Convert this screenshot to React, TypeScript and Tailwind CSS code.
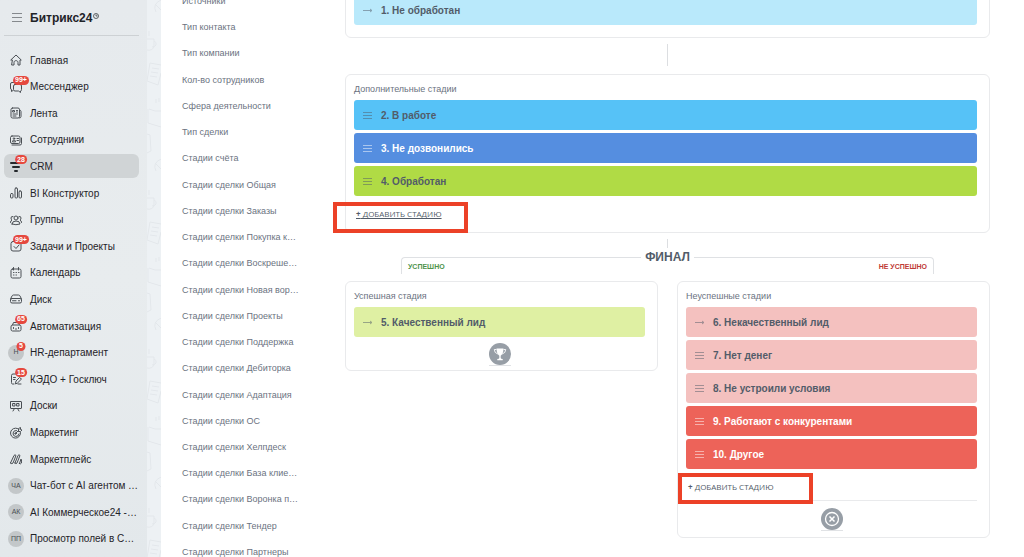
import React from "react";

type NavItem = {
  label: string;
  icon?: React.ReactNode;
  initials?: string;
  badge?: string;
  active?: boolean;
};

function Icon({ children }: { children: React.ReactNode }) {
  return (
    <svg
      viewBox="0 0 24 24"
      className="h-3 w-3 text-[#4a4f54]"
      fill="none"
      stroke="currentColor"
      strokeWidth="2"
      strokeLinecap="round"
      strokeLinejoin="round"
      aria-hidden="true"
    >
      {children}
    </svg>
  );
}

const navItems: NavItem[] = [
  {
    label: "Главная",
    icon: (
      <Icon>
        <path d="M4 12H1.500L12 2l10.500 10H20v10h-4v-5c0-5-8-5-8 0v5H4z" />
      </Icon>
    ),
  },
  {
    label: "Мессенджер",
    badge: "99+",
    icon: (
      <Icon>
        <path d="M7 3H4Q1 3 1 6v8q0 3 2 3v4l3-2M10 7h10q3 0 3 3v7q0 3-2 3v3l-4-3h-7q-3 0-3-3v-7q0-3 3-3z" />
      </Icon>
    ),
  },
  {
    label: "Лента",
    icon: (
      <Icon>
        <rect x="2" y="2" width="17" height="20" rx="3" />
        <path d="M19 6q3 0 3 3v10q0 3-3 3M6 7h3v3H6zM13 7h2M13 10h2M6 14h9M6 18h6" />
      </Icon>
    ),
  },
  {
    label: "Сотрудники",
    icon: (
      <Icon>
        <rect x="1" y="4" width="19" height="15" rx="3" />
        <path d="M4 22h16q3 0 3-3V8M5 15q0-3 3-3t3 3zM14 9h3M14 13h3" />
        <circle cx="8" cy="9" r="1.500" />
      </Icon>
    ),
  },
  {
    label: "CRM",
    badge: "28",
    active: true,
    icon: (
      <Icon>
        <path
          className="text-[#24282c]"
          stroke="currentColor"
          strokeWidth="4"
          d="M2 6h20M6 14h12M10 22h4"
        />
      </Icon>
    ),
  },
  {
    label: "BI Конструктор",
    icon: (
      <Icon>
        <rect x="1" y="13" width="5" height="9" rx="2" />
        <rect x="10" y="2" width="5" height="20" rx="2" />
        <rect x="18" y="8" width="5" height="14" rx="2" />
      </Icon>
    ),
  },
  {
    label: "Группы",
    icon: (
      <Icon>
        <circle cx="12" cy="8" r="4" />
        <path d="M4 20q0-6 8-6t8 6q-8 3-16 0zM6 5Q2 4 2 8q0 3 2 4-3 1-3 5M18 5q4-1 4 3 0 3-2 4 3 1 3 5" />
      </Icon>
    ),
  },
  {
    label: "Задачи и Проекты",
    badge: "99+",
    icon: (
      <Icon>
        <rect x="2" y="3" width="20" height="19" rx="4" />
        <path d="m8 13 4 4 6-7" />
      </Icon>
    ),
  },
  {
    label: "Календарь",
    icon: (
      <Icon>
        <rect x="2" y="4" width="20" height="18" rx="3" />
        <path d="M7 1v5M17 1v5M7 11h1M12 11h1M17 11h1M7 16h1M12 16h1" />
      </Icon>
    ),
  },
  {
    label: "Диск",
    icon: (
      <Icon>
        <path d="M1 12 4 6q1-2 3-2h10q2 0 3 2l3 6" />
        <rect x="1" y="11" width="22" height="9" rx="3" />
        <path d="M5 15.500h7M17 15.500h2" />
      </Icon>
    ),
  },
  {
    label: "Автоматизация",
    badge: "65",
    icon: (
      <Icon>
        <path d="M2 13q0-3 3-3h14q3 0 3 3v6q0 3-3 3H5q-3 0-3-3zM5 10l2-5h9l3 5M7 15v2M17 15v2M11 18h2" />
      </Icon>
    ),
  },
  { label: "HR-департамент", initials: "H", badge: "5" },
  {
    label: "КЭДО + Госключ",
    badge: "15",
    icon: (
      <Icon>
        <path d="M8 22H5q-2 0-2-3V5q0-3 3-3h9M7 9h4M7 13h3M11 21l1-5 7-7 4 3-8 8zM16 22h6" />
      </Icon>
    ),
  },
  {
    label: "Доски",
    icon: (
      <Icon>
        <rect x="1" y="3" width="22" height="14" rx="1" />
        <path d="M6 7h4v5H6zM14 7h4v5h-4zM9 17l-3 5M15 17l3 5" />
      </Icon>
    ),
  },
  {
    label: "Маркетинг",
    icon: (
      <Icon>
        <path d="M15 3A10 10 0 1 0 21 11M13 7a6 6 0 1 0 5 7M11 13l7-7M17 7V3l4-2v4l3 1-3 3h-4" />
        <circle cx="11" cy="13" r="1.500" />
      </Icon>
    ),
  },
  {
    label: "Маркетплейс",
    icon: (
      <Icon>
        <path d="m1 20 7-15q2-3 4 0l-6 15q-2 3-5 0zM10 20l6-15q2-3 4 0l-6 15q-2 3-4 0zM19 21l3-9q2 4 1 8-1 3-4 1z" />
      </Icon>
    ),
  },
  { label: "Чат-бот с AI агентом …", initials: "ЧА" },
  { label: "AI Коммерческое24 -…", initials: "АК" },
  { label: "Просмотр полей в С…", initials: "ПП" },
];

const directories = [
  "Источники",
  "Тип контакта",
  "Тип компании",
  "Кол-во сотрудников",
  "Сфера деятельности",
  "Тип сделки",
  "Стадии счёта",
  "Стадии сделки Общая",
  "Стадии сделки Заказы",
  "Стадии сделки Покупка к…",
  "Стадии сделки Воскреше…",
  "Стадии сделки Новая вор…",
  "Стадии сделки Проекты",
  "Стадии сделки Поддержка",
  "Стадии сделки Дебиторка",
  "Стадии сделки Адаптация",
  "Стадии сделки ОС",
  "Стадии сделки Хелпдеск",
  "Стадии сделки База клие…",
  "Стадии сделки Воронка п…",
  "Стадии сделки Тендер",
  "Стадии сделки Партнеры",
];

function NavLink({ item }: { item: NavItem }) {
  return (
    <a
      href="#"
      className={`flex h-6 items-center gap-1.5 rounded-md pl-1 ${
        item.active ? "bg-[#d0d4d6]" : ""
      }`}
    >
      <span className="relative flex h-4 w-4 shrink-0 items-center justify-center">
        {item.icon}
        {item.initials && (
          <span className="flex h-4 w-4 items-center justify-center rounded-full bg-[#c3c7c9] text-[7px] text-[#4a4f54]">
            {item.initials}
          </span>
        )}
        {item.badge && (
          <span className="absolute -top-[3px] left-[13px] flex h-[9px] min-w-[9px] -translate-x-1/2 items-center justify-center rounded-full bg-[#e5483f] px-[2px] text-[7px] font-bold text-white">
            {item.badge}
          </span>
        )}
      </span>
      <span className="whitespace-nowrap">{item.label}</span>
    </a>
  );
}

function Sidebar() {
  return (
    <aside className="flex w-[147px] shrink-0 flex-col bg-linear-to-b from-[#e6eaed] via-[#e8ecee] to-[#e3e8eb] pr-2 pl-1 text-[10px] text-[#1f2328]">
      <header className="flex h-9 shrink-0 items-center border-b border-[#cdd1d4] pl-2">
        <button type="button" aria-label="Меню" className="mr-2">
          <svg viewBox="0 0 10 9" className="h-[9px] w-[10px]" stroke="#85898d">
            <path d="M0 .5h10M0 4.500h10M0 8.500h10" />
          </svg>
        </button>
        <span className="text-[12px] font-bold">Битрикс24</span>
        <svg
          viewBox="0 0 12 12"
          className="mb-1 ml-px h-1.5 w-1.5"
          fill="none"
          stroke="#33383c"
          strokeWidth="1.500"
        >
          <circle cx="6" cy="6" r="5" />
          <path d="M6 3v3h3" />
        </svg>
      </header>
      <nav className="flex flex-1 flex-col justify-between pt-3 pb-1.5">
        {navItems.map((item) => (
          <NavLink key={item.label} item={item} />
        ))}
      </nav>
    </aside>
  );
}

// Strip of the desktop wallpaper between the sidebar and the page
function Wallpaper() {
  return (
    <div className="w-3.5 shrink-0 bg-[#edf1f4]">
      <svg className="h-full w-full" fill="none" stroke="#e3e7eb" aria-hidden="true">
        <defs>
          <pattern id="doodles" width="14" height="159" patternUnits="userSpaceOnUse">
            <path d="M14 0Q5 4 9 12M8 4l6 6M2 31v5M0 39h7v8q-2 4-7 3M7 41q3 1 2 4-1 2-4 2M3 63l11 2M3 63 0 81l11 4 3-12M5 68l7 1M4 72l7 1M3 76l7 1M9 99v4M12 98v4M2 109q6 3 12 2M1 109v14l13 4M0 134l3 1 1 16-4 2" />
          </pattern>
        </defs>
        <rect width="100%" height="100%" stroke="none" fill="url(#doodles)" />
      </svg>
    </div>
  );
}

function Stage({
  title,
  color,
  fixed,
}: {
  title: string;
  color: string;
  fixed?: boolean;
}) {
  return (
    <li
      className={`flex h-[30px] items-center gap-[9px] rounded-[3px] pl-[9px] text-[10px] font-bold ${color}`}
    >
      <svg
        viewBox="0 0 9 9"
        className="h-[9px] w-[9px] opacity-50"
        fill="none"
        stroke="currentColor"
        aria-hidden="true"
      >
        {fixed ? (
          <path d="M0 4.500h9M7 3l2 1.500L7 6" />
        ) : (
          <path d="M0 1.500h9M0 4.500h9M0 7.500h9" />
        )}
      </svg>
      {title}
    </li>
  );
}

function Card({
  title,
  children,
}: {
  title?: string;
  children: React.ReactNode;
}) {
  return (
    <section className="rounded-md border border-[#e9eaec] pr-3 pl-2">
      {title && (
        <h2 className="pt-2 pb-[5px] text-[9px] leading-3 text-[#6b737f]">
          {title}
        </h2>
      )}
      {children}
    </section>
  );
}

function AddStage({ underline }: { underline?: boolean }) {
  return (
    <div className="flex h-9 items-center pl-0.5">
      <button
        type="button"
        className={`font-['Open_Sans',sans-serif] text-[8px] text-[#525c69] ${
          underline ? "underline" : ""
        }`}
      >
        <b>+</b> ДОБАВИТЬ СТАДИЮ
      </button>
    </div>
  );
}

function Connector({ className }: { className: string }) {
  return <div className={`mx-auto w-px bg-[#dcdee1] ${className}`} />;
}

function Funnel() {
  return (
    <main className="-mt-1.5 flex-1 pr-[34px] pl-[45px]">
      <Card>
        <ul className="pb-3">
          <Stage title="1. Не обработан" color="bg-[#b9e9fb] text-[#525c69]" fixed />
        </ul>
      </Card>
      <Connector className="mt-1.5 mb-2 h-[22px]" />

      <div className="relative">
        <Card title="Дополнительные стадии">
          <ul className="space-y-[3px]">
            <Stage title="2. В работе" color="bg-[#56c2f7] text-[#525c69]" />
            <Stage title="3. Не дозвонились" color="bg-[#558ee0] text-white" />
            <Stage title="4. Обработан" color="bg-[#b0db45] text-[#525c69]" />
          </ul>
          <AddStage underline />
        </Card>
        <div className="pointer-events-none absolute -left-3 bottom-0 h-[31px] w-[135px] border-4 border-[#ec4127]" />
      </div>

      <Connector className="mt-1.5 h-[9px]" />
      <div className="mx-14 mt-px mb-[7px] flex gap-1">
        <div className="mt-2 h-[17px] flex-1 rounded-tl-sm border-t border-l border-[#dfe1e4] pt-[3px] pl-1.5 text-[7px] leading-3 font-bold text-[#4f944c]">
          УСПЕШНО
        </div>
        <h1 className="text-[12px] leading-4 font-bold text-[#525c69]">ФИНАЛ</h1>
        <div className="mt-2 h-[17px] flex-1 rounded-tr-sm border-t border-r border-[#dfe1e4] pt-[3px] pr-1.5 text-right text-[7px] leading-3 font-bold text-[#c03a36]">
          НЕ УСПЕШНО
        </div>
      </div>

      <div className="grid grid-cols-2 items-start gap-[19px]">
        <Card title="Успешная стадия">
          <ul>
            <Stage title="5. Качественный лид" color="bg-[#dff0a3] text-[#525c69]" fixed />
          </ul>
          <div className="flex justify-center pt-1.5 pb-1">
            <span className="border-b border-[#e0e2e5]">
              <svg viewBox="0 0 22 22" className="h-[22px] w-[22px]" aria-hidden="true">
                <circle cx="11" cy="11" r="11" fill="#979ea6" />
                <path
                  fill="#fff"
                  d="M7.500 5.500h7l-.3 3q-.5 3-2.500 4.200V15q0 1 2 1v1.200H8.300V16q2 0 2-1v-2.300Q8.300 11.500 7.800 8.500z"
                />
                <path
                  d="M7.500 6.500H5.300q0 3.500 3.500 4.500M14.500 6.500h2.200q0 3.500-3.500 4.500"
                  fill="none"
                  stroke="#fff"
                  strokeWidth=".9"
                />
              </svg>
            </span>
          </div>
        </Card>

        <div className="relative">
          <Card title="Неуспешные стадии">
            <ul className="space-y-[3px]">
              <Stage title="6. Некачественный лид" color="bg-[#f4c1bf] text-[#525c69]" fixed />
              <Stage title="7. Нет денег" color="bg-[#f4c1bf] text-[#525c69]" />
              <Stage title="8. Не устроили условия" color="bg-[#f4c1bf] text-[#525c69]" />
              <Stage title="9. Работают с конкурентами" color="bg-[#ed6359] text-white" />
              <Stage title="10. Другое" color="bg-[#ed6359] text-white" />
            </ul>
            <AddStage />
            <div className="-mt-[5px] flex justify-center border-t border-[#e9eaec] pt-[7px] pb-1.5">
              <span className="border-b border-[#e0e2e5]">
                <svg viewBox="0 0 22 22" className="h-[22px] w-[22px]" aria-hidden="true">
                  <circle cx="11" cy="11" r="11" fill="#979ea6" />
                  <circle cx="11" cy="11" r="6.500" fill="none" stroke="#fff" strokeWidth="1.300" />
                  <path d="m8.500 8.500 5 5m0-5-5 5" stroke="#fff" strokeWidth="1.500" />
                </svg>
              </span>
            </div>
          </Card>
          <div className="pointer-events-none absolute bottom-[34px] left-px h-[31px] w-[135px] border-4 border-[#ec4127]" />
        </div>
      </div>
    </main>
  );
}

export default function App() {
  return (
    <div className="flex h-screen overflow-hidden bg-white font-['Liberation_Sans',Arial,sans-serif]">
      <Sidebar />
      <Wallpaper />
      <nav className="-mt-2 -mb-1 flex w-[139px] shrink-0 flex-col justify-between pl-[21px] text-[9px] leading-[18px] text-[#6b737f]">
        {directories.map((name) => (
          <a key={name} href="#" className="whitespace-nowrap">
            {name}
          </a>
        ))}
      </nav>
      <Funnel />
    </div>
  );
}
